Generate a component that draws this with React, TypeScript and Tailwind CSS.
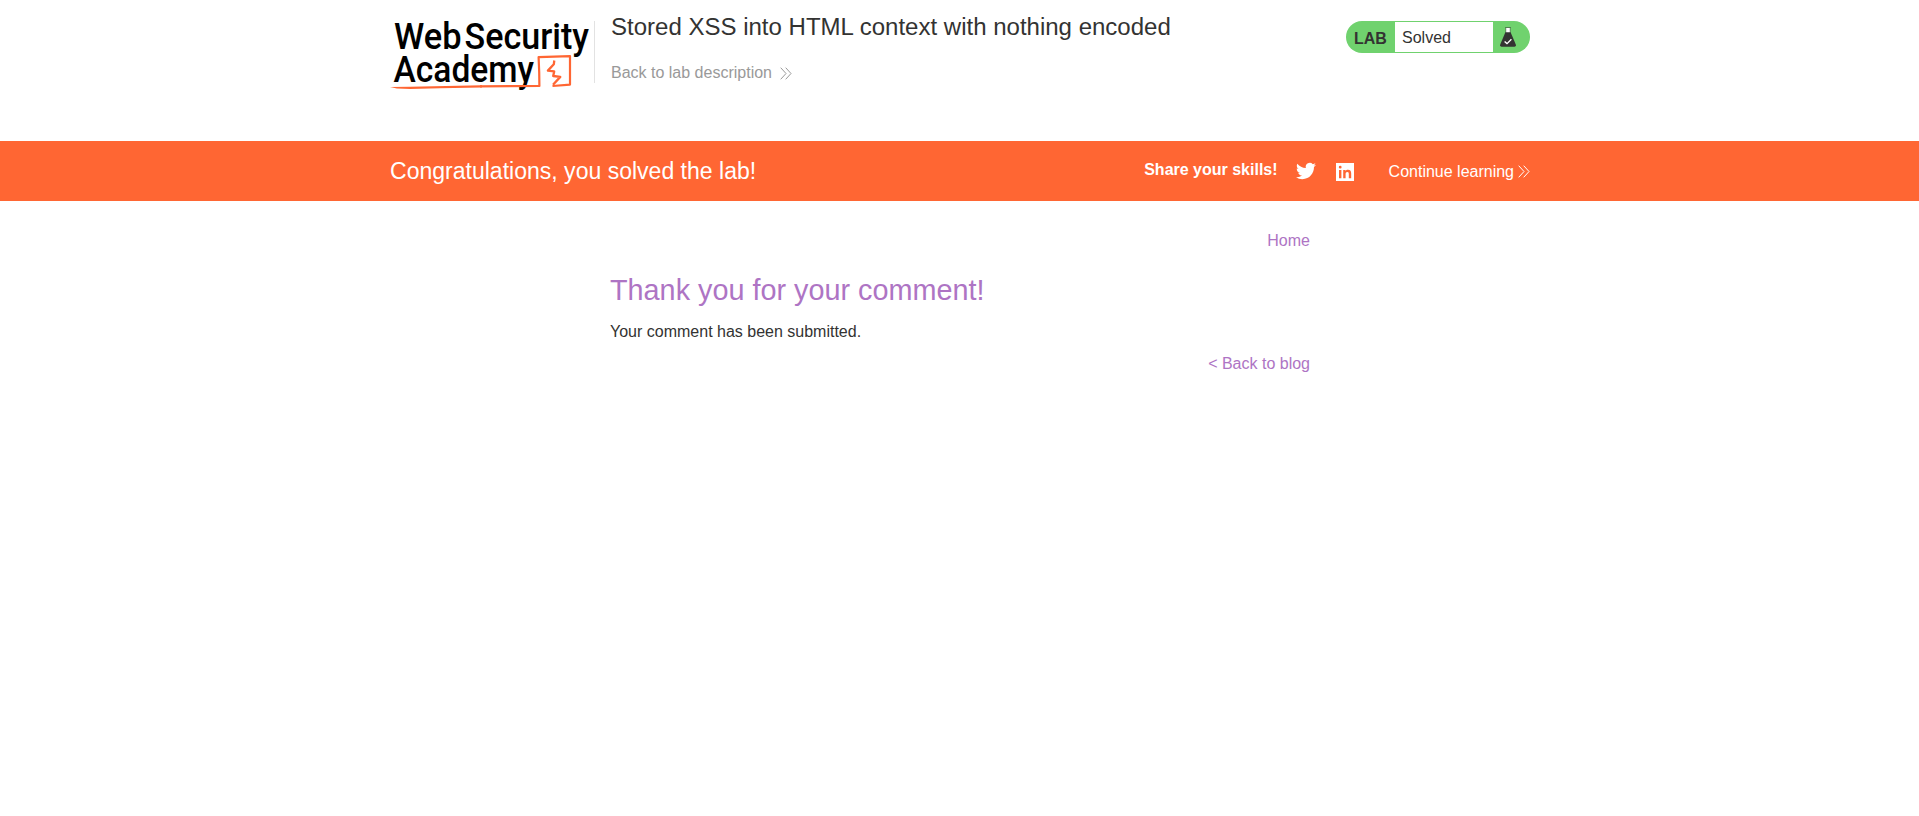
import React from "react";

function Logo() {
  return (
    <svg
      className="block h-[80px] w-[204px] shrink-0 overflow-visible"
      viewBox="390 15 204 80"
      role="img"
      aria-label="Web Security Academy"
    >
      <g
        fill="#000"
        fontFamily="Roboto, 'Liberation Sans', sans-serif"
        fontSize="37.5"
        fontWeight="500"
      >
        <text x="394" y="49.2" textLength="67.5" lengthAdjust="spacingAndGlyphs">Web</text>
        <text x="464.5" y="49.2" textLength="124.5" lengthAdjust="spacingAndGlyphs">Security</text>
        <text x="393.5" y="81.8" textLength="140.5" lengthAdjust="spacingAndGlyphs">Academy</text>
      </g>
      <path
        d="M480 86.4 L539.4 86 L539.2 72 L538.6 57.2 L570 56.2 L570 84.6 L552.5 86"
        fill="none"
        stroke="#ff6633"
        strokeWidth="2.2"
        strokeLinejoin="round"
      />
      <path d="M390 87 L410 86.8 L482 85.3 L482 87.5 L440 88.2 L410 89 L397 88.6Z" fill="#ff6633" />
      <path
        d="M554.3 60.5 L553.8 64.3 L547.9 70.6 L554.2 71.4 L553.2 76 L560.3 76.9 L553 84.8"
        fill="none"
        stroke="#ff6633"
        strokeWidth="2.3"
        strokeLinejoin="round"
      />
    </svg>
  );
}

function Chevrons() {
  return (
    <svg className="block h-[13px] w-[12px] shrink-0" viewBox="0 0 12 13" fill="none" stroke="currentColor" strokeWidth="1">
      <path d="M0.7 0.7 L6 6.5 L0.7 12.3 M5.7 0.7 L11 6.5 L5.7 12.3" />
    </svg>
  );
}

function Flask() {
  return (
    <svg className="block h-[20px] w-[16px]" viewBox="0 0 16 20">
      <path d="M5.9 1 H10.1 V6 H5.9Z" fill="#fff" />
      <path d="M5 0.5 H11 M5.8 1 V6 M10.2 1 V6" stroke="#333332" strokeWidth="0.5" fill="none" />
      <path d="M5.4 5.2 H10.6 L15.8 17.6 Q16.2 19.8 14.5 19.8 H1.5 Q-0.2 19.8 0.2 17.6Z" fill="#333332" />
      <path d="M4.6 14.4 L7 16.6 L11.4 12.3" fill="none" stroke="#fff" strokeWidth="1.3" />
    </svg>
  );
}

function Twitter() {
  return (
    <svg className="block h-[20px] w-[20px]" viewBox="0 0 24 24" fill="currentColor">
      <path d="M23.953 4.57a10 10 0 01-2.825.775 4.958 4.958 0 002.163-2.723c-.951.555-2.005.959-3.127 1.184a4.92 4.92 0 00-8.384 4.482C7.69 8.095 4.067 6.13 1.64 3.162a4.822 4.822 0 00-.666 2.475c0 1.71.87 3.213 2.188 4.096a4.904 4.904 0 01-2.228-.616v.06a4.923 4.923 0 003.946 4.827 4.996 4.996 0 01-2.212.085 4.936 4.936 0 004.604 3.417 9.867 9.867 0 01-6.102 2.105c-.39 0-.779-.023-1.17-.067a13.995 13.995 0 007.557 2.209c9.053 0 13.998-7.496 13.998-13.985 0-.21 0-.42-.015-.63A9.935 9.935 0 0024 4.59z" />
    </svg>
  );
}

function LinkedIn() {
  return (
    <svg className="block h-[18px] w-[18px]" viewBox="0 0 18 18" fill="none">
      <path d="M0 0H18V18H0Z" fill="#fff" />
      <path d="M3 7H5.4V15.2H3Z M2.8 4.2a1.4 1.4 0 1 0 2.8 0a1.4 1.4 0 1 0 -2.8 0Z M7.2 7H9.5V8.1C10 7.3 10.9 6.8 12 6.8C14.5 6.8 15.2 8.3 15.2 10.6V15.2H12.8V11.2C12.8 9.8 12.5 8.9 11.4 8.9C10.1 8.9 9.6 9.8 9.6 11.2V15.2H7.2Z" fill="#ff6633" />
    </svg>
  );
}

export default function App() {
  return (
    <div className="min-h-[816px] bg-white pl-px font-['Liberation_Sans',Arial,sans-serif] text-[16px] text-[#333332]">
      <header className="h-[141px]">
        <div className="mx-auto flex w-[1140px] items-start pt-[15px]">
          <Logo />
          <div className="mt-[6px] h-[62px] w-px shrink-0 bg-[#e2e2e2]" />
          <div className="ml-[16px] flex flex-col items-start">
            <h2 className="-mt-[3px] text-[24.03px] leading-[30px] whitespace-nowrap">
              Stored XSS into HTML context with nothing encoded
            </h2>
            <a className="mt-[19px] flex items-center gap-[8px] leading-[24px] whitespace-nowrap text-[#999]">
              Back to lab description
              <Chevrons />
            </a>
          </div>
          <div className="mt-[6px] ml-auto flex h-[32px] w-[184px] shrink-0 overflow-hidden rounded-full bg-[#70d26e] py-px">
            <span className="w-[49px] pt-[3px] pl-[8px] leading-[28px] font-bold">LAB</span>
            <p className="w-[98px] bg-white pl-[7px] leading-[31px]">Solved</p>
            <span className="pt-[5px] pl-[7px]">
              <Flask />
            </span>
          </div>
        </div>
      </header>

      <section className="-ml-px h-[60px] bg-[#ff6633] pl-px text-white">
        <div className="mx-auto flex h-full w-[1140px] items-center">
          <h4 className="text-[23.04px] leading-[30px] whitespace-nowrap">Congratulations, you solved the lab!</h4>
          <div className="ml-auto flex items-center">
            <span className="pb-[3px] leading-[24px] font-bold whitespace-nowrap">Share your skills!</span>
            <span className="ml-[18px]">
              <Twitter />
            </span>
            <span className="ml-[20px] pt-px">
              <LinkedIn />
            </span>
            <a className="ml-[35px] flex items-center gap-[4px] pt-px leading-[24px] whitespace-nowrap">
              Continue learning
              <Chevrons />
            </a>
          </div>
        </div>
      </section>

      <main className="mx-auto w-[700px] pt-[28px]">
        <nav className="text-right leading-[24px] text-[#ae74c4]">
          <a>Home</a>
        </nav>
        <h1 className="mt-[19px] text-[28.8px] leading-[36px] whitespace-nowrap text-[#ae74c4]">
          Thank you for your comment!
        </h1>
        <p className="mt-[12px] leading-[24px]">Your comment has been submitted.</p>
        <div className="mt-[8px] text-right leading-[24px] text-[#ae74c4]">
          <a>&lt; Back to blog</a>
        </div>
      </main>
    </div>
  );
}
